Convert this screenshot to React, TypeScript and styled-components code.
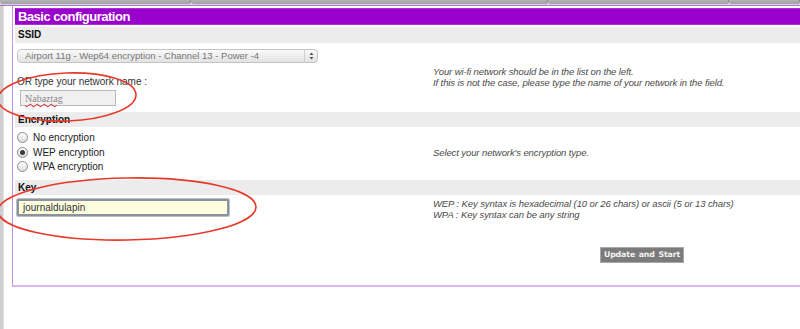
import React from 'react';
import styled, { createGlobalStyle } from 'styled-components';

const GlobalStyle = createGlobalStyle`
  html, body {
    margin: 0;
    padding: 0;
    background: #ffffff;
    font-family: "Liberation Sans", Arial, sans-serif;
  }
  body {
    width: 800px;
    height: 329px;
    overflow: hidden;
  }
`;

const Page = styled.div`
  position: relative;
  width: 800px;
  height: 329px;
  display: flex;
  flex-direction: column;
`;

const TabStrip = styled.div`
  height: 5px;
  display: flex;
  background: #d6d6d6;
  border-bottom: 1px solid #b070d8;
`;

const Tab = styled.div<{ w: number }>`
  width: ${p => p.w}px;
  height: 4px;
  background: linear-gradient(#b4b4b4, #a2a2a2);
  border-right: 1px solid #8a8a8a;
  border-radius: 0 0 3px 3px;
`;

const Body = styled.div`
  flex: 1;
  display: flex;
`;

const Gutter = styled.div`
  width: 3px;
  background: #cfcfcf;
  border-right: 1px solid #e4e4e4;
  margin-right: 8px;
`;

const Panel = styled.div`
  flex: 1;
  height: 277px;
  padding: 2px 0 0 2px;
  border-left: 1px solid #c294e6;
  border-bottom: 2px solid #d7b8ea;
  display: flex;
  flex-direction: column;
`;

const Header = styled.div`
  height: 15px;
  background: #9900cc;
  border-top: 1px solid #a830d8;
  border-bottom: 1px solid #a830d8;
  color: #ffffff;
  font-weight: bold;
  font-size: 13px;
  line-height: 15px;
  padding-left: 3px;
  margin-bottom: 2px;
  letter-spacing: -0.5px;
`;

const SectionTitle = styled.div<{ h: number }>`
  height: ${p => p.h}px;
  line-height: ${p => p.h}px;
  background: #ececec;
  font-weight: bold;
  font-size: 10px;
  color: #111111;
  padding-left: 3px;
`;

const Row = styled.div<{ h: number }>`
  height: ${p => p.h}px;
  display: grid;
  grid-template-columns: 418px 1fr;
`;

const LeftCol = styled.div`
  display: flex;
  flex-direction: column;
  align-items: flex-start;
  padding-left: 2px;
`;

const RightCol = styled.div<{ top: number }>`
  padding-top: ${p => p.top}px;
  display: flex;
  flex-direction: column;
  align-items: flex-start;
`;

const Hint = styled.div`
  font-style: italic;
  font-size: 9.5px;
  line-height: 11px;
  color: #4a4a4a;
  letter-spacing: -0.1px;
`;

const Select = styled.div`
  margin-top: 6px;
  width: 299px;
  height: 12px;
  display: flex;
  border: 1px solid #c4c4c4;
  border-radius: 4px;
  background: linear-gradient(#fafafa, #e2e2e2);
  font-size: 9.5px;
  line-height: 12px;
  color: #777777;
`;

const SelectText = styled.div`
  flex: 1;
  padding-left: 7px;
  white-space: nowrap;
`;

const SelectArrow = styled.div`
  width: 12px;
  border-left: 1px solid #d0d0d0;
  display: flex;
  align-items: center;
  justify-content: center;
`;

const Label = styled.div`
  margin-top: 13px;
  font-size: 10px;
  color: #333333;
  line-height: 11px;
`;

const NameInput = styled.div`
  margin-top: 3px;
  margin-left: 3px;
  width: 90px;
  height: 14px;
  border: 1px solid #b8b8b8;
  background: #f0f0f0;
  font-family: "Liberation Serif", "Times New Roman", serif;
  font-size: 10px;
  line-height: 15px;
  color: #888888;
  padding-left: 4px;
`;

const Misspelled = styled.span`
  text-decoration: underline wavy #e02020;
  text-decoration-thickness: 1px;
`;

const RadioList = styled.div`
  padding-top: 5px;
  display: flex;
  flex-direction: column;
  gap: 3px;
`;

const RadioLine = styled.div`
  display: flex;
  align-items: center;
  gap: 5px;
  height: 11.5px;
  font-size: 10px;
  color: #222222;
`;

const Radio = styled.span<{ on?: boolean }>`
  width: 9px;
  height: 9px;
  border-radius: 50%;
  border: 1px solid #8a8a8a;
  background: linear-gradient(#ffffff, #dcdcdc);
  display: flex;
  align-items: center;
  justify-content: center;
  &::after {
    content: '';
    width: 5px;
    height: 5px;
    border-radius: 50%;
    background: ${p => (p.on ? '#3a3a3a' : 'transparent')};
  }
`;

const KeyInput = styled.div`
  margin-top: 4px;
  width: 204px;
  height: 13px;
  border: 2px solid #8a939c;
  outline: 1px solid #b9c0c8;
  border-radius: 1px;
  background: #ffffe0;
  font-size: 10px;
  line-height: 13px;
  color: #333333;
  padding-left: 4px;
`;

const Button = styled.div`
  margin-top: 27px;
  margin-left: 167px;
  width: 82px;
  height: 14px;
  border: 1px solid #a8a8a8;
  background: #7b7b7b;
  color: #f4f4f4;
  font-family: "DejaVu Sans", sans-serif;
  font-weight: bold;
  font-size: 7.8px;
  line-height: 14px;
  text-align: center;
  letter-spacing: -0.1px;
  word-spacing: 1px;
`;

const Annotations = styled.svg`
  position: absolute;
  left: 0;
  top: 0;
  pointer-events: none;
`;

export default function App() {
  return (
    <Page>
      <GlobalStyle />
      <TabStrip>
        <Tab w={191} />
        <Tab w={358} />
        <Tab w={181} />
        <Tab w={70} />
      </TabStrip>
      <Body>
        <Gutter />
        <Panel>
          <Header>Basic configuration</Header>

          <SectionTitle h={16}>SSID</SectionTitle>
          <Row h={69}>
            <LeftCol>
              <Select>
                <SelectText>Airport 11g - Wep64 encryption - Channel 13 - Power -4</SelectText>
                <SelectArrow>
                  <svg width="5" height="8" viewBox="0 0 5 8">
                    <path d="M0.5 3 L2.5 0.5 L4.5 3 Z M0.5 5 L2.5 7.5 L4.5 5 Z" fill="#555" />
                  </svg>
                </SelectArrow>
              </Select>
              <Label>OR type your network name :</Label>
              <NameInput>
                <Misspelled>Nabaztag</Misspelled>
              </NameInput>
            </LeftCol>
            <RightCol top={23}>
              <Hint>Your wi-fi network should be in the list on the left.</Hint>
              <Hint>If this is not the case, please type the name of your network in the field.</Hint>
            </RightCol>
          </Row>

          <SectionTitle h={15}>Encryption</SectionTitle>
          <Row h={53}>
            <LeftCol>
              <RadioList>
                <RadioLine><Radio />No encryption</RadioLine>
                <RadioLine><Radio on />WEP encryption</RadioLine>
                <RadioLine><Radio />WPA encryption</RadioLine>
              </RadioList>
            </LeftCol>
            <RightCol top={20}>
              <Hint>Select your network's encryption type.</Hint>
            </RightCol>
          </Row>

          <SectionTitle h={15}>Key</SectionTitle>
          <Row h={88}>
            <LeftCol>
              <KeyInput>journaldulapin</KeyInput>
            </LeftCol>
            <RightCol top={3}>
              <Hint>WEP : Key syntax is hexadecimal (10 or 26 chars) or ascii (5 or 13 chars)</Hint>
              <Hint>WPA : Key syntax can be any string</Hint>
              <Button>Update and Start</Button>
            </RightCol>
          </Row>
        </Panel>
      </Body>

      <Annotations width="800" height="329" viewBox="0 0 800 329">
        <ellipse cx="67" cy="97" rx="69" ry="24" fill="none" stroke="#e8382a" strokeWidth="1.6" transform="rotate(-2 67 97)" />
        <ellipse cx="127" cy="209" rx="129" ry="31" fill="none" stroke="#e8382a" strokeWidth="1.6" transform="rotate(-1 127 209)" />
      </Annotations>
    </Page>
  );
}
